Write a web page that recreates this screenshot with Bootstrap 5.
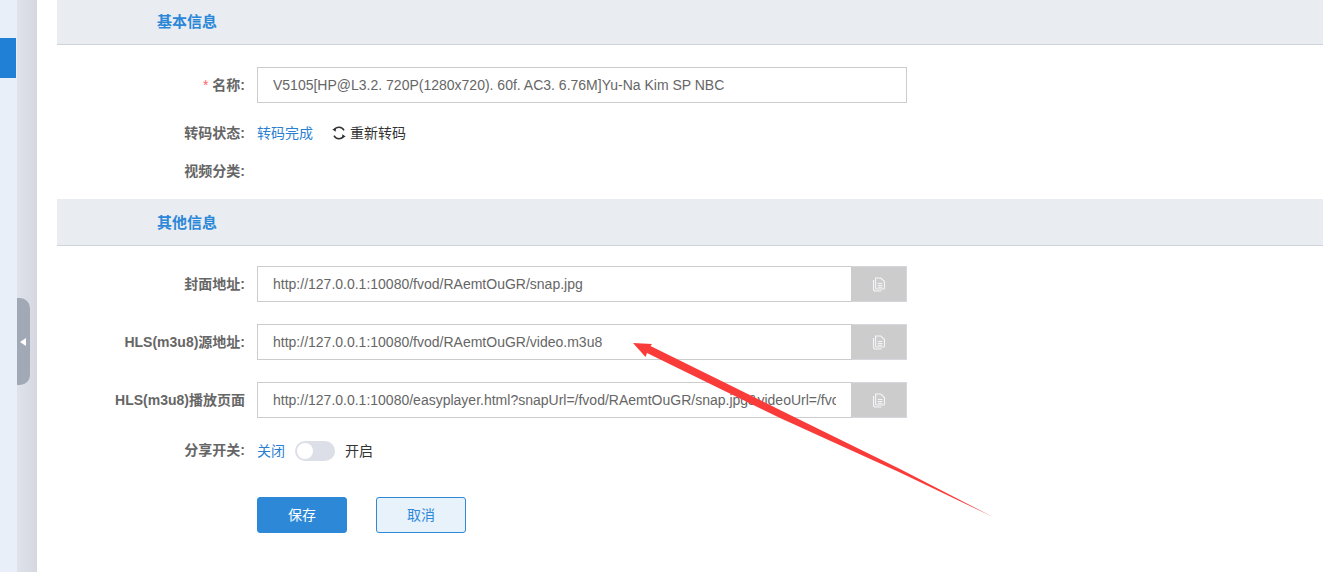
<!DOCTYPE html>
<html lang="zh-CN">
<head>
<meta charset="utf-8">
<title>视频详情</title>
<link rel="stylesheet" href="https://cdn.jsdelivr.net/npm/bootstrap@5.3.0/dist/css/bootstrap.min.css">
<style>
html,body{height:572px;overflow:hidden}
body{font-family:"Liberation Sans","Noto Sans CJK SC",sans-serif;font-size:14px;color:#333;background:#fff}
.shell{height:572px;position:relative}
.side-rail{width:17px;background:#e8eff8;flex:none;padding-top:38px}
.side-active{height:40px;width:16px;background:#1f80d6}
.side-gutter{width:20px;flex:none;background:linear-gradient(90deg,#dfe2ea,#d5d8e1)}
.side-handle{position:absolute;left:17px;top:298px;width:13px;height:87px;background:#a0a9b5;border-radius:0 10px 10px 0;display:flex;align-items:center;justify-content:center}
.side-handle i{display:block;width:0;height:0;border-top:4.5px solid transparent;border-bottom:4.5px solid transparent;border-right:6px solid #fff;margin-left:-1px}
.main-pane{padding-left:20px;min-width:0}
.sec-head{background:#e9ecf1;border-bottom:1px solid #cfd4dc;padding-left:100px;color:#2b87d8;font-size:15px;font-weight:700;display:flex;align-items:center}
.sec-a{height:45px}
.sec-b{height:47px;padding-top:2px;margin-top:18px}
.form-line{display:flex;align-items:center}
.field-label{width:188px;flex:none;text-align:right;font-weight:700;color:#666;font-size:14px;margin-right:12px;line-height:20px}
.field-label b{color:#f66;font-weight:400;margin-right:4px}
.label-lift{margin-bottom:2px}
.field-box{width:650px;flex:none}
.form-control.flat{height:36px;border:1px solid #ccc;border-radius:0;color:#666;font-size:14px;padding:0 15px;box-shadow:none;font-family:inherit}
.copy-btn{width:56px;height:36px;background:#ccc;border:1px solid #d5d7dd;border-left:0;border-radius:0;padding:0;display:flex;align-items:center;justify-content:center}
.link-blue{color:#2b7fd0}
.retrans{color:#333;margin-left:19px;display:inline-flex;align-items:center;gap:4px}
.toggle-track{width:40px;height:20px;border-radius:10px;background:#dcdfe7;padding:2px;display:block;margin:0 10px}
.toggle-knob{display:block;width:16px;height:16px;border-radius:50%;background:#fff}
.save-btn,.cancel-btn{width:90px;height:36px;border-radius:3px;font-size:14px;padding:0;display:flex;align-items:center;justify-content:center}
.save-btn{background:#2d88d8;border:1px solid #2d88d8;color:#fff}
.cancel-btn{background:#e8f2fb;border:1px solid #2d88d8;color:#2d88d8;margin-left:29px}
.m-a{margin-top:22px}.m-b{margin-top:20px}.m-c{margin-top:18px}.m-d{margin-top:20px}.m-f{margin-top:22px}.m-e{margin-top:35px;padding-left:200px}
.h-tall{height:20px}
.arrow-mark{position:absolute;left:0;top:0;pointer-events:none}
</style>
</head>
<body>
<div class="shell d-flex">
  <div class="side-rail"><div class="side-active"></div></div>
  <div class="side-gutter"></div>
  <div class="side-handle"><i></i></div>
  <div class="main-pane flex-grow-1">
    <div class="sec-head sec-a">基本信息</div>
    <div class="form-line m-a">
      <label class="field-label"><b>*</b>名称:</label>
      <div class="field-box"><input class="form-control flat" value="V5105[HP@L3.2. 720P(1280x720). 60f. AC3. 6.76M]Yu-Na Kim SP NBC"></div>
    </div>
    <div class="form-line m-b h-tall">
      <span class="field-label">转码状态:</span>
      <span class="link-blue">转码完成</span>
      <span class="retrans">
        <svg width="14" height="14" viewBox="0 0 14 14" fill="none"><path d="M2 9.600A5.600 5.600 0 0 0 11.800 10" stroke="#333" stroke-width="1.5"/><path d="M12 4.400A5.600 5.600 0 0 0 2.200 4" stroke="#333" stroke-width="1.5"/><path d="M0.300 3.400L3.900 1.800L3.700 5.700Z M13.700 10.600L10.100 12.200L10.300 8.300Z" fill="#333"/></svg>
        重新转码
      </span>
    </div>
    <div class="form-line h-tall m-c">
      <span class="field-label">视频分类:</span>
    </div>
    <div class="sec-head sec-b">其他信息</div>
    <div class="form-line m-d">
      <label class="field-label">封面地址:</label>
      <div class="field-box input-group flex-nowrap">
        <input class="form-control flat" value="http://127.0.0.1:10080/fvod/RAemtOuGR/snap.jpg">
        <button class="copy-btn" type="button" aria-label="复制"><svg width="14" height="15" viewBox="0 0 14 15" fill="none" stroke="#f4f5f8" stroke-width="1.1"><path d="M1.500 3v9a2 2 0 0 0 2 2h6"/><path d="M3.600 1h5.200l3.700 3.600v6.400a1 1 0 0 1-1 1H4.600a1 1 0 0 1-1-1Z" fill="#ccc"/><path d="M5.800 6.500h4.600M5.800 8.500h4.600M5.800 10.300h4.600"/></svg></button>
      </div>
    </div>
    <div class="form-line m-a">
      <label class="field-label">HLS(m3u8)源地址:</label>
      <div class="field-box input-group flex-nowrap">
        <input class="form-control flat" value="http://127.0.0.1:10080/fvod/RAemtOuGR/video.m3u8">
        <button class="copy-btn" type="button" aria-label="复制"><svg width="14" height="15" viewBox="0 0 14 15" fill="none" stroke="#f4f5f8" stroke-width="1.1"><path d="M1.500 3v9a2 2 0 0 0 2 2h6"/><path d="M3.600 1h5.200l3.700 3.600v6.400a1 1 0 0 1-1 1H4.600a1 1 0 0 1-1-1Z" fill="#ccc"/><path d="M5.800 6.500h4.600M5.800 8.500h4.600M5.800 10.300h4.600"/></svg></button>
      </div>
    </div>
    <div class="form-line m-a">
      <label class="field-label">HLS(m3u8)播放页面</label>
      <div class="field-box input-group flex-nowrap">
        <input class="form-control flat" value="http://127.0.0.1:10080/easyplayer.html?snapUrl=/fvod/RAemtOuGR/snap.jpg&amp;videoUrl=/fvod/RAemtOuGR/video.m3u8">
        <button class="copy-btn" type="button" aria-label="复制"><svg width="14" height="15" viewBox="0 0 14 15" fill="none" stroke="#f4f5f8" stroke-width="1.1"><path d="M1.500 3v9a2 2 0 0 0 2 2h6"/><path d="M3.600 1h5.200l3.700 3.600v6.400a1 1 0 0 1-1 1H4.600a1 1 0 0 1-1-1Z" fill="#ccc"/><path d="M5.800 6.500h4.600M5.800 8.500h4.600M5.800 10.300h4.600"/></svg></button>
      </div>
    </div>
    <div class="form-line m-f">
      <span class="field-label label-lift">分享开关:</span>
      <span class="link-blue">关闭</span>
      <span class="toggle-track"><span class="toggle-knob"></span></span>
      <span>开启</span>
    </div>
    <div class="d-flex m-e">
      <button class="btn save-btn" type="button">保存</button>
      <button class="btn cancel-btn" type="button">取消</button>
    </div>
  </div>
  <svg class="arrow-mark" width="1323" height="572" viewBox="0 0 1323 572" aria-hidden="true"><polygon points="633,343 652,344 650.500,346 780,410 900,469 993,517 900,472.500 780,418 647,353 645.500,357" fill="#f93c3a"/></svg>
</div>
<script src="https://cdn.jsdelivr.net/npm/bootstrap@5.3.0/dist/js/bootstrap.bundle.min.js"></script>
</body>
</html>
